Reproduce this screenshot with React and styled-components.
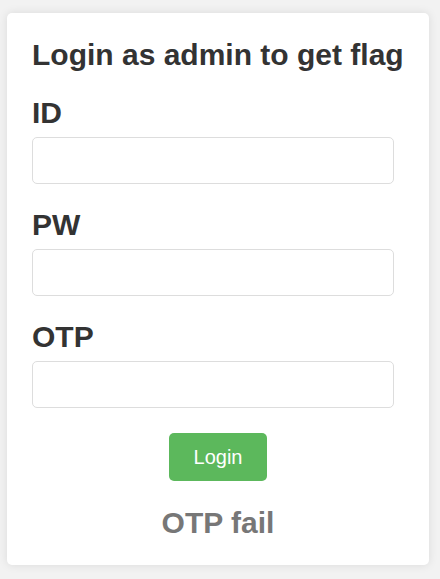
import React from "react";
import styled, { createGlobalStyle } from "styled-components";

const GlobalStyle = createGlobalStyle`
   html, body {
      margin: 0;
      padding: 0;
      background: #f2f2f2;
      font-family: "Liberation Sans", Arial, sans-serif;
      color: #333;
   }
`;

const Page = styled.div`
   padding: 13px 11px 15px 7px;
`;

const Card = styled.div`
   width: 422px;
   box-sizing: border-box;
   padding: 25px 25px 26px 25px;
   background: #fff;
   border-radius: 5px;
   box-shadow: 0 0 10px rgba(0, 0, 0, 0.1);
`;

const Title = styled.h2`
   margin: 0 0 25px;
   font-size: 30px;
   line-height: 33px;
   font-weight: bold;
   white-space: nowrap;
`;

const Field = styled.div`
   display: flex;
   flex-direction: column;
   margin-bottom: 24px;
`;

const Label = styled.label`
   font-size: 30px;
   line-height: 33px;
   font-weight: bold;
   margin: 0 0 8px;
`;

const Input = styled.input`
   width: 362px;
   height: 47px;
   box-sizing: border-box;
   border: 1px solid #ddd;
   border-radius: 5px;
   padding: 6px 12px;
   font-size: 16px;
   font-family: inherit;
   outline: none;
`;

const Actions = styled.div`
   display: flex;
   flex-direction: column;
   align-items: center;
   padding-top: 1px;
`;

const Button = styled.button`
   height: 48px;
   padding: 0 25px;
   border: 0;
   border-radius: 5px;
   background: #5cb85c;
   color: #fff;
   font-family: inherit;
   font-size: 20px;
   cursor: pointer;
`;

const Message = styled.h2`
   margin: 25px 0 0;
   font-size: 30px;
   line-height: 33px;
   font-weight: bold;
   color: #777;
   text-align: center;
`;

const fields = [
   { id: "id", label: "ID", type: "text" },
   { id: "pw", label: "PW", type: "password" },
   { id: "otp", label: "OTP", type: "text" },
];

export default function App() {
   return (
      <>
         <GlobalStyle />
         <Page>
            <Card>
               <Title>Login as admin to get flag</Title>
               {fields.map((f) => (
                  <Field key={f.id}>
                     <Label htmlFor={f.id}>{f.label}</Label>
                     <Input id={f.id} name={f.id} type={f.type} />
                  </Field>
               ))}
               <Actions>
                  <Button type="button">Login</Button>
                  <Message>OTP fail</Message>
               </Actions>
            </Card>
         </Page>
      </>
   );
}
